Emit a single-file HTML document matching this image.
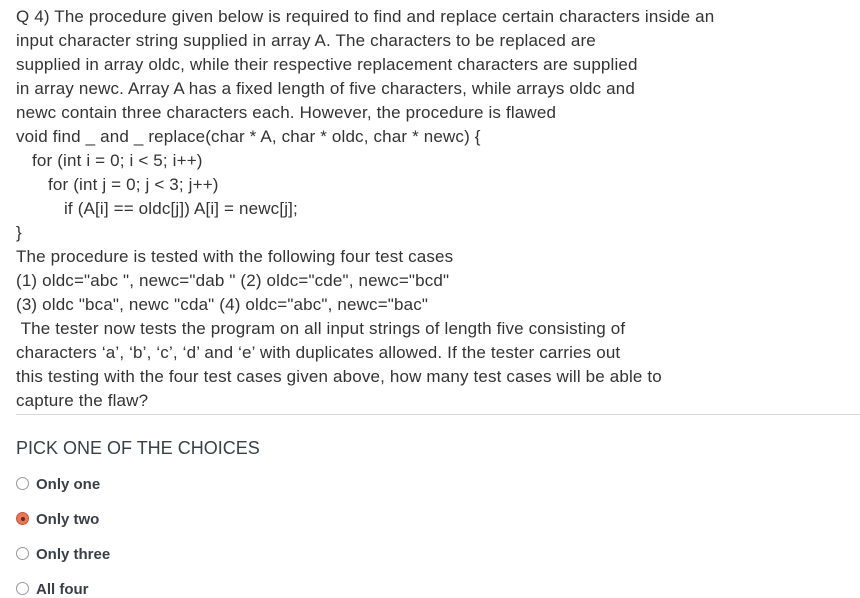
<!DOCTYPE html>
<html><head><style>
body{margin:0;background:#fff;width:860px;height:584px;overflow:hidden;font-family:"Liberation Sans",sans-serif;color:#333}
.q{position:absolute;left:16px;top:5px;font-size:17px;line-height:24px;white-space:pre;letter-spacing:0.16px}
.hr{position:absolute;left:16px;right:0;top:414px;border-top:1px solid #d8d8d8}
.pick{position:absolute;left:16px;top:438px;font-size:18px;color:#3a3f47}
.opt{position:absolute;left:16px;font-size:15px;font-weight:bold;color:#3a3f47}
.r{display:inline-block;width:13px;height:13px;border:1px solid #999;border-radius:50%;vertical-align:-1px;margin-right:7px;box-sizing:border-box;background:#fff}
.sel{background:#e8765a;border-color:#c9553a;position:relative}
.sel:after{content:"";position:absolute;left:3.5px;top:3.5px;width:4px;height:4px;border-radius:50%;background:#6a2a1a}
</style></head><body>
<div class="q">Q 4) The procedure given below is required to find and replace certain characters inside an
input character string supplied in array A. The characters to be replaced are
supplied in array oldc, while their respective replacement characters are supplied
in array newc. Array A has a fixed length of five characters, while arrays oldc and
newc contain three characters each. However, the procedure is flawed
void find _ and _ replace(char * A, char * oldc, char * newc) {
<span style="margin-left:16px">for (int i = 0; i &lt; 5; i++)</span>
<span style="margin-left:32px">for (int j = 0; j &lt; 3; j++)</span>
<span style="margin-left:48px">if (A[i] == oldc[j]) A[i] = newc[j];</span>
}
The procedure is tested with the following four test cases
(1) oldc="abc ", newc="dab " (2) oldc="cde", newc="bcd"
(3) oldc "bca", newc "cda" (4) oldc="abc", newc="bac"
 The tester now tests the program on all input strings of length five consisting of
characters ‘a’, ‘b’, ‘c’, ‘d’ and ‘e’ with duplicates allowed. If the tester carries out
this testing with the four test cases given above, how many test cases will be able to
capture the flaw?</div>
<div class="hr"></div>
<div class="pick">PICK ONE OF THE CHOICES</div>
<div class="opt" style="top:476px"><span class="r"></span>Only one</div>
<div class="opt" style="top:511px"><span class="r sel"></span>Only two</div>
<div class="opt" style="top:546px"><span class="r"></span>Only three</div>
<div class="opt" style="top:581px"><span class="r"></span>All four</div>
</body></html>
